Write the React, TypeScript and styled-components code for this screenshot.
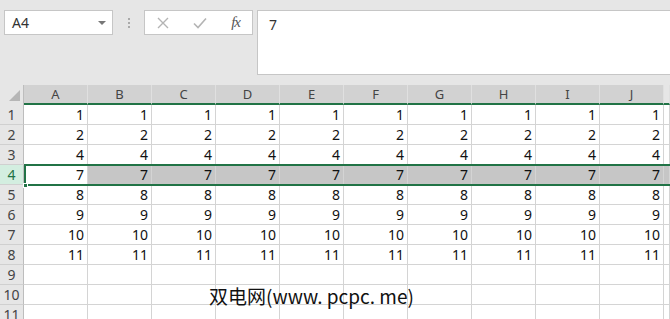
import styled, { createGlobalStyle } from 'styled-components';

const GlobalStyle = createGlobalStyle`
  html, body {
    margin: 0;
    padding: 0;
    background: #ffffff;
    overflow: hidden;
  }
  * { box-sizing: border-box; }
`;

const Page = styled.div`
  width: 670px;
  height: 319px;
  overflow: hidden;
  position: relative;
  font-family: "Noto Sans", "Liberation Sans", sans-serif;
`;

const TopBar = styled.div`
  height: 85px;
  background: #e6e6e6;
  display: flex;
  align-items: flex-start;
  padding: 10px 0 0 4px;
`;

const NameBox = styled.div`
  width: 109px;
  height: 25px;
  background: #fff;
  border: 1px solid #c6c6c6;
  display: flex;
  align-items: center;
  justify-content: space-between;
  padding: 0 6px 0 7px;
  font-size: 14px;
  color: #333;
`;

const Arrow = styled.span`
  width: 0;
  height: 0;
  border-left: 4px solid transparent;
  border-right: 4px solid transparent;
  border-top: 4px solid #777;
`;

const Grip = styled.div`
  width: 31px;
  height: 25px;
  display: flex;
  flex-direction: column;
  align-items: center;
  justify-content: center;
  gap: 2px;
`;

const Dot = styled.span`
  width: 2px;
  height: 2px;
  background: #aaa;
`;

const FxBox = styled.div`
  width: 109px;
  height: 25px;
  background: #fff;
  border: 1px solid #c6c6c6;
  display: flex;
  align-items: center;
  justify-content: space-between;
  padding: 0 12px 0 12px;
  margin-right: 4px;
`;

const FxLabel = styled.span`
  font-family: "Liberation Serif", serif;
  font-style: italic;
  font-size: 15px;
  color: #555;
  letter-spacing: -1px;
`;

const FormulaInput = styled.div`
  flex: 1;
  height: 65px;
  background: #fff;
  border: 1px solid #c6c6c6;
  border-right: none;
  padding: 4px 11px;
  font-size: 14px;
  color: #333;
`;

const Sheet = styled.div`
  position: relative;
  display: grid;
  grid-template-columns: 24px repeat(10, 64px) 1fr;
  grid-auto-rows: 20px;
`;

const Corner = styled.div`
  background: #e6e6e6;
  border-right: 1px solid #bdbdbd;
  position: relative;
  &::after {
    content: '';
    position: absolute;
    right: 3px;
    bottom: 4px;
    border-left: 11px solid transparent;
    border-bottom: 11px solid #b6b6b6;
  }
`;

const ColHead = styled.div<{ $plain?: boolean }>`
  background: ${p => (p.$plain ? '#e6e6e6' : '#d2d2d2')};
  border-right: 1px solid #e0e0e0;
  border-bottom: 2px solid #217346;
  font-size: 13px;
  color: #444;
  display: flex;
  align-items: center;
  justify-content: center;
  padding-bottom: 1px;
`;

const RowHead = styled.div<{ $active?: boolean }>`
  background: ${p => (p.$active ? '#d3eee0' : '#e6e6e6')};
  color: ${p => (p.$active ? '#217346' : '#444')};
  border-right: 1px solid #bdbdbd;
  border-bottom: 1px solid #d0d0d0;
  font-size: 14px;
  display: flex;
  align-items: center;
  justify-content: center;
`;

const Cell = styled.div<{ $sel?: boolean }>`
  background: ${p => (p.$sel ? '#c6c6c6' : '#fff')};
  border-right: 1px solid #d4d4d4;
  border-bottom: 1px solid #d4d4d4;
  font-size: 14px;
  color: #111;
  display: flex;
  align-items: center;
  justify-content: flex-end;
  padding-right: 3px;
`;

const Selection = styled.div`
  position: absolute;
  left: 24px;
  right: -4px;
  top: 79px;
  height: 22px;
  border: 2px solid #217346;
  pointer-events: none;
`;

const Handle = styled.div`
  position: absolute;
  left: 23px;
  top: 98px;
  width: 5px;
  height: 5px;
  background: #217346;
  border: 1px solid #fff;
`;

const Watermark = styled.div`
  position: absolute;
  left: 209px;
  top: 282px;
  font-family: "Noto Sans CJK SC", "Liberation Sans", sans-serif;
  font-size: 19px;
  color: #111;
  white-space: nowrap;
`;

const cols = ['A', 'B', 'C', 'D', 'E', 'F', 'G', 'H', 'I', 'J'];
const values = [1, 2, 4, 7, 8, 9, 10, 11, null, null, null];

export default function App() {
  return (
    <Page>
      <GlobalStyle />
      <TopBar>
        <NameBox>
          A4
          <Arrow />
        </NameBox>
        <Grip>
          <Dot />
          <Dot />
          <Dot />
        </Grip>
        <FxBox>
          <svg width="12" height="12" viewBox="0 0 12 12">
            <path d="M1 1 L11 11 M11 1 L1 11" stroke="#b4b4b4" strokeWidth="1.4" fill="none" />
          </svg>
          <svg width="14" height="12" viewBox="0 0 14 12">
            <path d="M1 6.5 L5 10.5 L13 1.5" stroke="#b4b4b4" strokeWidth="1.6" fill="none" />
          </svg>
          <FxLabel>fx</FxLabel>
        </FxBox>
        <FormulaInput>7</FormulaInput>
      </TopBar>
      <Sheet>
        <Corner />
        {cols.map(c => (
          <ColHead key={c}>{c}</ColHead>
        ))}
        <ColHead $plain />
        {values.map((v, r) => (
          <Row key={r} index={r} value={v} />
        ))}
        <Selection />
        <Handle />
      </Sheet>
      <Watermark>双电网(www. pcpc. me)</Watermark>
    </Page>
  );
}

function Row({ index, value }: { index: number; value: number | null }) {
  const active = index === 3;
  return (
    <>
      <RowHead $active={active}>{index + 1}</RowHead>
      {cols.map((c, i) => (
        <Cell key={c} $sel={active && i > 0}>
          {value}
        </Cell>
      ))}
      <Cell $sel={active} />
    </>
  );
}
